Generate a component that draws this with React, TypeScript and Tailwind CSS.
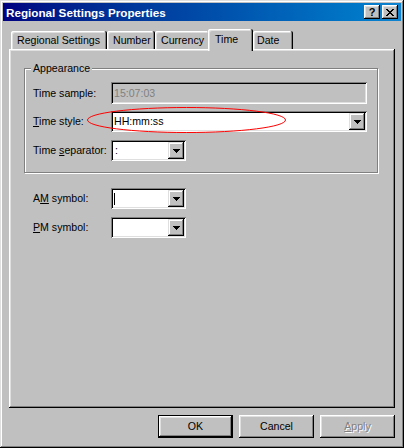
import React from "react";

function Arrow() {
  return (
    <svg width="7" height="4" viewBox="0 0 7 4" shapeRendering="crispEdges">
      <rect x="0" y="0" width="7" height="1" fill="#000" />
      <rect x="1" y="1" width="5" height="1" fill="#000" />
      <rect x="2" y="2" width="3" height="1" fill="#000" />
      <rect x="3" y="3" width="1" height="1" fill="#000" />
    </svg>
  );
}

function DropButton() {
  return (
    <div className="flex h-[17px] w-[16px] shrink-0 items-center justify-center bg-[#c0c0c0] shadow-[inset_-1px_-1px_#000,inset_1px_1px_#dfdfdf,inset_-2px_-2px_#808080,inset_2px_2px_#fff]">
      <Arrow />
    </div>
  );
}

function CloseGlyph() {
  return (
    <svg width="8" height="7" viewBox="0 0 8 7" shapeRendering="crispEdges">
      <path
        fill="#000"
        d="M0 0h2v1H0zM6 0h2v1H6zM1 1h2v1H1zM5 1h2v1H5zM2 2h4v1H2zM3 3h2v1H3zM2 4h4v1H2zM1 5h2v1H1zM5 5h2v1H5zM0 6h2v1H0zM6 6h2v1H6z"
      />
    </svg>
  );
}

export default function App() {
  return (
    <div className="relative flex h-[448px] w-[404px] flex-col bg-[#c0c0c0] p-[3px] font-['Liberation_Sans',Arial,sans-serif] text-[10.6px] leading-[13px] text-black shadow-[inset_-1px_-1px_#000,inset_1px_1px_#dfdfdf,inset_-2px_-2px_#808080,inset_2px_2px_#fff]">
      {/* Title bar */}
      <div className="flex h-[18px] items-center bg-gradient-to-r from-[#000080] to-[#1084d0] pl-[3px] pr-[3px]">
        <span className="flex-1 text-[11.7px] font-bold text-white">Regional Settings Properties</span>
        <div className="flex gap-[2px]">
          <div className="flex h-[14px] w-[16px] items-center justify-center bg-[#c0c0c0] text-[11px] font-bold leading-[11px] shadow-[inset_-1px_-1px_#000,inset_1px_1px_#fff,inset_-2px_-2px_#808080,inset_2px_2px_#dfdfdf]">
            ?
          </div>
          <div className="flex h-[14px] w-[16px] items-center justify-center bg-[#c0c0c0] shadow-[inset_-1px_-1px_#000,inset_1px_1px_#fff,inset_-2px_-2px_#808080,inset_2px_2px_#dfdfdf]">
            <CloseGlyph />
          </div>
        </div>
      </div>

      {/* Content */}
      <div className="flex flex-col px-[6px] pt-[8px]">
        {/* Tabs */}
        <div className="relative z-10 flex h-[20px] items-end pl-[2px]">
          <div className="flex h-[18px] w-[96px] items-center rounded-tl-[2px] rounded-tr-[2px] bg-[#c0c0c0] pl-[6px] pt-[1px] shadow-[inset_-1px_0_#000,inset_1px_1px_#fff,inset_-2px_0_#808080,inset_2px_2px_#dfdfdf]">
            Regional Settings
          </div>
          <div className="flex h-[18px] w-[48px] items-center rounded-tl-[2px] rounded-tr-[2px] bg-[#c0c0c0] pl-[6px] pt-[1px] shadow-[inset_-1px_0_#000,inset_1px_1px_#fff,inset_-2px_0_#808080,inset_2px_2px_#dfdfdf]">
            Number
          </div>
          <div className="flex h-[18px] w-[55px] items-center rounded-tl-[2px] rounded-tr-[2px] bg-[#c0c0c0] pl-[6px] pt-[1px] shadow-[inset_-1px_0_#000,inset_1px_1px_#fff,inset_-2px_0_#808080,inset_2px_2px_#dfdfdf]">
            Currency
          </div>
          <div className="relative z-10 -mb-[2px] -ml-[2px] flex h-[22px] w-[45px] items-start rounded-tl-[2px] rounded-tr-[2px] bg-[#c0c0c0] pl-[7px] pt-[4px] shadow-[inset_-1px_0_#000,inset_1px_1px_#fff,inset_-2px_0_#808080,inset_2px_2px_#dfdfdf]">
            Time
          </div>
          <div className="flex h-[18px] w-[40px] items-center rounded-tl-[2px] rounded-tr-[2px] bg-[#c0c0c0] pl-[4px] pt-[1px] shadow-[inset_-1px_0_#000,inset_1px_1px_#fff,inset_-2px_0_#808080,inset_2px_2px_#dfdfdf]">
            Date
          </div>
        </div>

        {/* Panel */}
        <div className="flex h-[359px] flex-col bg-[#c0c0c0] pl-[15px] pt-[19px] shadow-[inset_-1px_-1px_#000,inset_1px_1px_#fff,inset_-2px_-2px_#808080,inset_2px_2px_#dfdfdf]">
          {/* Group box */}
          <div className="flex w-[354px] flex-col border border-[#808080] pb-[11px] shadow-[1px_1px_0_#fff,inset_1px_1px_0_#fff]">
            <span className="-mt-[8px] ml-[6px] w-fit bg-[#c0c0c0] px-[2px] leading-[14px]">Appearance</span>

            <div className="mt-[7px] flex items-center pl-[8px]">
              <span className="w-[78px]">Time sample:</span>
              <div className="flex h-[22px] w-[256px] items-center bg-[#c0c0c0] pl-[3px] text-[#808080] shadow-[inset_1px_1px_#808080,inset_-1px_-1px_#fff,inset_2px_2px_#000,inset_-2px_-2px_#dfdfdf]">
                15:07:03
              </div>
            </div>

            <div className="mt-[7px] flex items-center pl-[8px]">
              <span className="w-[78px]">
                <u>T</u>ime style:
              </span>
              <div className="flex h-[21px] w-[256px] items-center bg-white p-[2px] shadow-[inset_1px_1px_#808080,inset_-1px_-1px_#fff,inset_2px_2px_#000,inset_-2px_-2px_#dfdfdf]">
                <span className="flex-1 pl-[1px]">HH:mm:ss</span>
                <DropButton />
              </div>
            </div>

            <div className="mt-[8px] flex items-center pl-[8px]">
              <span className="w-[78px]">
                Time <u>s</u>eparator:
              </span>
              <div className="flex h-[21px] w-[75px] items-center bg-white p-[2px] shadow-[inset_1px_1px_#808080,inset_-1px_-1px_#fff,inset_2px_2px_#000,inset_-2px_-2px_#dfdfdf]">
                <span className="flex-1 pl-[2px]">:</span>
                <DropButton />
              </div>
            </div>
          </div>

          <div className="mt-[15px] flex items-center pl-[9px]">
            <span className="w-[78px]">
              A<u>M</u> symbol:
            </span>
            <div className="flex h-[21px] w-[75px] items-center bg-white p-[2px] shadow-[inset_1px_1px_#808080,inset_-1px_-1px_#fff,inset_2px_2px_#000,inset_-2px_-2px_#dfdfdf]">
              <div className="flex flex-1 items-center pl-[1px]">
                <div className="h-[12px] w-[1px] bg-black" />
              </div>
              <DropButton />
            </div>
          </div>

          <div className="mt-[8px] flex items-center pl-[9px]">
            <span className="w-[78px]">
              <u>P</u>M symbol:
            </span>
            <div className="flex h-[21px] w-[75px] items-center bg-white p-[2px] shadow-[inset_1px_1px_#808080,inset_-1px_-1px_#fff,inset_2px_2px_#000,inset_-2px_-2px_#dfdfdf]">
              <span className="flex-1" />
              <DropButton />
            </div>
          </div>
        </div>

        {/* Buttons */}
        <div className="mt-[7px] flex justify-end gap-[6px]">
          <div className="flex h-[23px] w-[75px] items-center justify-center border border-black bg-[#c0c0c0] shadow-[inset_-1px_-1px_#000,inset_1px_1px_#fff,inset_-2px_-2px_#808080,inset_2px_2px_#dfdfdf]">
            OK
          </div>
          <div className="flex h-[23px] w-[75px] items-center justify-center bg-[#c0c0c0] shadow-[inset_-1px_-1px_#000,inset_1px_1px_#fff,inset_-2px_-2px_#808080,inset_2px_2px_#dfdfdf]">
            Cancel
          </div>
          <div className="flex h-[23px] w-[75px] items-center justify-center bg-[#c0c0c0] text-[#808080] shadow-[inset_-1px_-1px_#000,inset_1px_1px_#fff,inset_-2px_-2px_#808080,inset_2px_2px_#dfdfdf] [text-shadow:1px_1px_0_#fff]">
            <span>
              <u>A</u>pply
            </span>
          </div>
        </div>
      </div>

      {/* Red annotation ellipse */}
      <svg
        className="pointer-events-none absolute left-0 top-0"
        width="404"
        height="448"
        viewBox="0 0 404 448"
      >
        <ellipse cx="186.5" cy="120" rx="99" ry="12.5" fill="none" stroke="#ff0000" strokeWidth="1" />
      </svg>
    </div>
  );
}
